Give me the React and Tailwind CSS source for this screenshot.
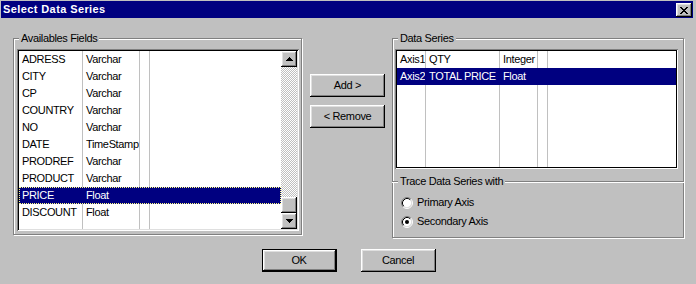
import React from 'react';

const fields = [
  ['ADRESS', 'Varchar'],
  ['CITY', 'Varchar'],
  ['CP', 'Varchar'],
  ['COUNTRY', 'Varchar'],
  ['NO', 'Varchar'],
  ['DATE', 'TimeStamp'],
  ['PRODREF', 'Varchar'],
  ['PRODUCT', 'Varchar'],
  ['PRICE', 'Float'],
  ['DISCOUNT', 'Float'],
];

const series = [
  ['Axis1', 'QTY', 'Integer'],
  ['Axis2', 'TOTAL PRICE', 'Float'],
];

// win95 raised edge
const raised =
  'bg-[#c0c0c0] shadow-[inset_-1px_-1px_0_#000,inset_1px_1px_0_#fff,inset_-2px_-2px_0_#808080,inset_2px_2px_0_#dfdfdf]';

function Arrow({ down }) {
  return (
    <svg width="7" height="4" viewBox="0 0 7 4" shapeRendering="crispEdges">
      {down ? <polygon points="0,0 7,0 3.5,4" fill="#000" /> : <polygon points="0,4 7,4 3.5,0" fill="#000" />}
    </svg>
  );
}

function GroupLabel({ children }) {
  return (
    <span className="absolute left-[5px] top-[-8px] bg-[#c0c0c0] px-[2px] leading-[14px]">{children}</span>
  );
}

function Radio({ checked, label }) {
  return (
    <div className="flex h-[19px] items-center gap-[4px]">
      <svg width="12" height="12" viewBox="0 0 12 12">
        <circle cx="6" cy="6" r="4.5" fill="#fff" />
        <path d="M2.11 9.89 A5.5 5.5 0 0 1 9.89 2.11" stroke="#808080" fill="none" />
        <path d="M9.89 2.11 A5.5 5.5 0 0 1 2.11 9.89" stroke="#fff" fill="none" />
        <path d="M2.82 9.18 A4.5 4.5 0 0 1 9.18 2.82" stroke="#000" fill="none" />
        <path d="M9.18 2.82 A4.5 4.5 0 0 1 2.82 9.18" stroke="#dfdfdf" fill="none" />
        {checked && <circle cx="6" cy="6" r="2" fill="#000" />}
      </svg>
      <span>{label}</span>
    </div>
  );
}

function Button({ children, isDefault }) {
  return (
    <div className={isDefault ? 'h-[23px] w-[75px] border border-black' : 'h-[23px] w-[75px]'}>
      <div className={`flex h-full w-full items-center justify-center ${raised}`}>{children}</div>
    </div>
  );
}

export default function App() {
  return (
    <div className="flex h-[284px] w-[696px] flex-col overflow-hidden bg-[#c0c0c0] font-['Liberation_Sans',Arial,sans-serif] text-[11px] tracking-[-0.35px] text-black">
      {/* title bar */}
      <div className="ml-[1px] mt-[1px] flex h-[17px] w-[692px] items-start justify-between bg-[#000080] pr-[1px] pt-[2px]">
        <span className="pl-[2px] text-[11px] font-bold leading-[13px] tracking-[0.4px] text-white">Select Data Series</span>
        <div className={`flex h-[14px] w-[16px] items-center justify-center ${raised}`}>
          <svg width="8" height="7" viewBox="0 0 8 7" shapeRendering="crispEdges">
            <path d="M0 0h2v1h-2zM6 0h2v1h-2zM1 1h2v1h-2zM5 1h2v1h-2zM2 2h4v1h-4zM3 3h2v1h-2zM2 4h4v1h-4zM1 5h2v1h-2zM5 5h2v1h-2zM0 6h2v1h-2zM6 6h2v1h-2z" fill="#000" />
          </svg>
        </div>
      </div>

      <div className="mt-[20px] flex">
        {/* Availables Fields */}
        <div className="relative ml-[13px] h-[197px] w-[289px] border border-[#808080] pl-[3px] pt-[10px] shadow-[inset_1px_1px_0_#fff,1px_1px_0_#fff]">
          <GroupLabel>Availables Fields</GroupLabel>
          <div className="flex h-[182px] w-[282px] bg-white p-[2px] shadow-[inset_1px_1px_0_#808080,inset_-1px_-1px_0_#fff,inset_2px_2px_0_#000,inset_-2px_-2px_0_#dfdfdf]">
            <div className="flex flex-1 flex-col overflow-hidden">
              {fields.map(([name, type]) => {
                const sel = name === 'PRICE';
                return (
                  <div
                    key={name}
                    className={
                      sel
                        ? 'flex h-[17px] shrink-0 bg-[#000080] leading-[17px] text-white outline outline-1 -outline-offset-1 outline-dotted outline-[#ffff80]'
                        : 'flex h-[17px] shrink-0 leading-[17px]'
                    }
                  >
                    <div className={`w-[64px] shrink-0 border-r pl-[3px] ${sel ? 'border-[#000080]' : 'border-[#c0c0c0]'}`}>{name}</div>
                    <div className={`w-[57px] shrink-0 overflow-hidden whitespace-nowrap border-r pl-[3px] ${sel ? 'border-[#000080]' : 'border-[#c0c0c0]'}`}>{type}</div>
                    <div className={`w-[10px] shrink-0 border-r ${sel ? 'border-[#000080]' : 'border-[#c0c0c0]'}`} />
                    <div className="flex-1" />
                  </div>
                );
              })}
              <div className="flex flex-1">
                <div className="w-[64px] shrink-0 border-r border-[#c0c0c0]" />
                <div className="w-[57px] shrink-0 border-r border-[#c0c0c0]" />
                <div className="w-[10px] shrink-0 border-r border-[#c0c0c0]" />
              </div>
            </div>
            {/* scroll bar */}
            <div className="flex w-[16px] flex-col">
              <div className={`flex h-[16px] items-center justify-center ${raised}`}>
                <Arrow />
              </div>
              <div className="flex-1 bg-[image:repeating-conic-gradient(#c0c0c0_0_25%,#fff_0_50%)] bg-[length:2px_2px]" />
              <div className={`h-[16px] ${raised}`} />
              <div className={`flex h-[16px] items-center justify-center ${raised}`}>
                <Arrow down />
              </div>
            </div>
          </div>
        </div>

        {/* Add / Remove */}
        <div className="ml-[8px] mt-[36px] flex flex-col gap-[8px]">
          <Button>Add &gt;</Button>
          <Button>&lt; Remove</Button>
        </div>

        {/* Data Series */}
        <div className="relative ml-[7px] h-[200px] w-[292px] border border-[#808080] pl-[2px] pt-[10px] shadow-[inset_1px_1px_0_#fff,1px_1px_0_#fff]">
          <GroupLabel>Data Series</GroupLabel>
          <div className="flex h-[120px] w-[283px] flex-col bg-white p-[2px] shadow-[inset_1px_1px_0_#808080,inset_-1px_-1px_0_#fff,inset_2px_2px_0_#000,inset_-2px_-2px_0_#000]">
            {series.map(([axis, name, type]) => {
              const sel = axis === 'Axis2';
              const line = sel ? 'border-[#000080]' : 'border-[#c0c0c0]';
              return (
                <div key={axis} className={sel ? 'flex h-[17px] shrink-0 bg-[#000080] leading-[17px] text-white' : 'flex h-[17px] shrink-0 leading-[17px]'}>
                  <div className={`w-[29px] shrink-0 overflow-hidden whitespace-nowrap border-r pl-[3px] ${line}`}>{axis}</div>
                  <div className={`w-[74px] shrink-0 whitespace-nowrap border-r pl-[3px] ${line}`}>{name}</div>
                  <div className={`w-[38px] shrink-0 overflow-hidden whitespace-nowrap border-r pl-[3px] ${line}`}>{type}</div>
                  <div className={`w-[10px] shrink-0 border-r ${line}`} />
                  <div className="flex-1" />
                </div>
              );
            })}
            <div className="flex flex-1">
              <div className="w-[29px] shrink-0 border-r border-[#c0c0c0]" />
              <div className="w-[74px] shrink-0 border-r border-[#c0c0c0]" />
              <div className="w-[38px] shrink-0 border-r border-[#c0c0c0]" />
              <div className="w-[10px] shrink-0 border-r border-[#c0c0c0]" />
            </div>
          </div>

          {/* Trace Data Series with */}
          <div className="relative -ml-[3px] -mr-[1px] mt-[12px] border-t border-[#808080] pl-[9px] pt-[11px] shadow-[inset_0_1px_0_#fff]">
            <span className="absolute left-[6px] top-[-8px] bg-[#c0c0c0] px-[2px] leading-[14px]">Trace Data Series with</span>
            <Radio label="Primary Axis" />
            <Radio checked label="Secondary Axis" />
          </div>
        </div>
      </div>

      <div className="mt-[11px] flex justify-center gap-[24px] pl-[1px]">
        <Button isDefault>OK</Button>
        <Button>Cancel</Button>
      </div>
    </div>
  );
}
